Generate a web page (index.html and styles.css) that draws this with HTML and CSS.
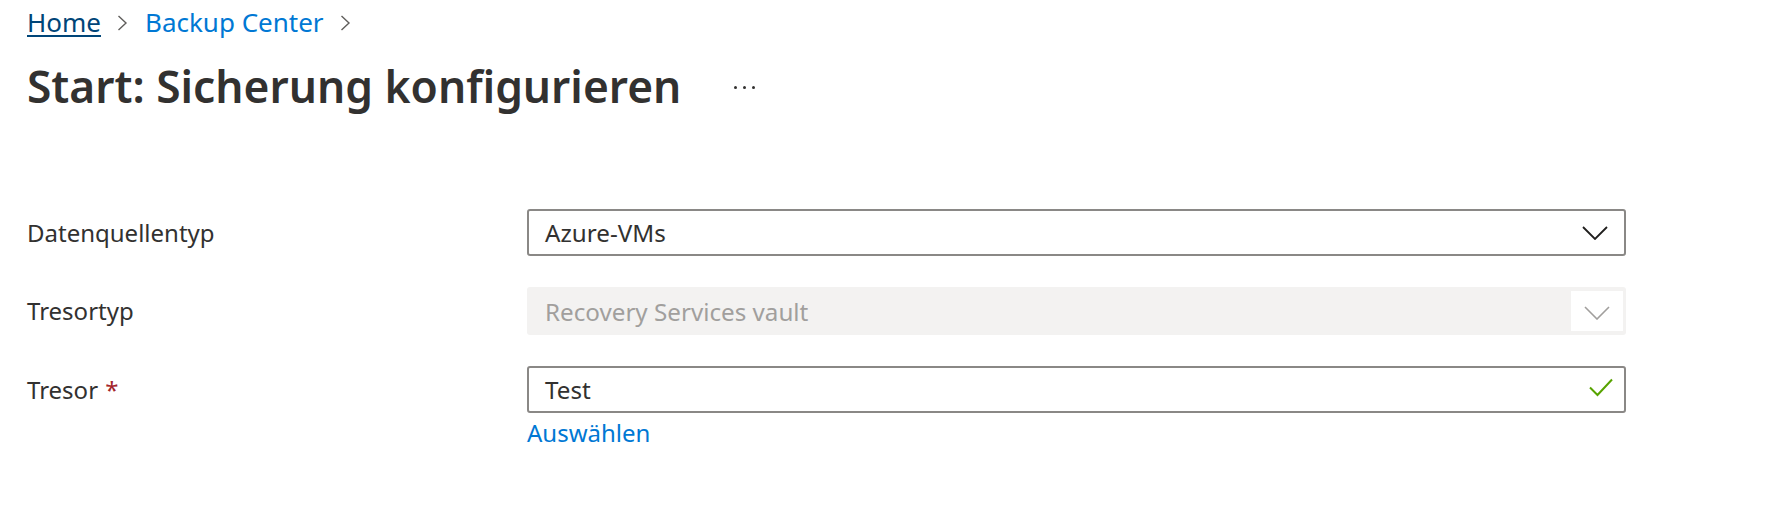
FILE: index.html
```html
<!DOCTYPE html>
<html lang="de">
<head>
<meta charset="utf-8">
<title>Start: Sicherung konfigurieren</title>
<link rel="stylesheet" href="styles.css">
</head>
<body>
<div class="page">
  <nav class="breadcrumb">
    <a class="crumb crumb-home" href="#">Home</a>
    <svg class="crumb-sep" width="11" height="16" viewBox="0 0 11 16"><path d="M1.5 1 L9 8 L1.5 15" fill="none" stroke="#605e5c" stroke-width="1.4"/></svg>
    <a class="crumb" href="#">Backup Center</a>
    <svg class="crumb-sep" width="11" height="16" viewBox="0 0 11 16"><path d="M1.5 1 L9 8 L1.5 15" fill="none" stroke="#605e5c" stroke-width="1.4"/></svg>
  </nav>

  <header class="title-bar">
    <h1 class="title">Start: Sicherung konfigurieren</h1>
    <span class="more" aria-label="Weitere Optionen"><i></i><i></i><i></i></span>
  </header>

  <form class="form">
    <div class="row">
      <label class="label">Datenquellentyp</label>
      <div class="control">
        <div class="field">
          <span class="value">Azure-VMs</span>
          <svg class="chevron" width="26" height="14" viewBox="0 0 26 14"><path d="M1 1 L13 13 L25 1" fill="none" stroke="#201f1e" stroke-width="1.8"/></svg>
        </div>
      </div>
    </div>

    <div class="row">
      <label class="label">Tresortyp</label>
      <div class="control">
        <div class="field field-disabled">
          <span class="value">Recovery Services vault</span>
          <span class="caret-box">
            <svg width="26" height="14" viewBox="0 0 26 14"><path d="M1 1 L13 13 L25 1" fill="none" stroke="#a19f9d" stroke-width="1.6"/></svg>
          </span>
        </div>
      </div>
    </div>

    <div class="row row-last">
      <label class="label">Tresor <span class="req">*</span></label>
      <div class="control">
        <div class="field">
          <span class="value">Test</span>
          <svg class="check" width="24" height="19" viewBox="0 0 24 19"><path d="M1 9.5 L8.5 17 L23 1.5" fill="none" stroke="#57a300" stroke-width="2"/></svg>
        </div>
      </div>
    </div>
    <div class="row-link">
      <span></span>
      <a class="link" href="#">Auswählen</a>
    </div>
  </form>
</div>
</body>
</html>
```
FILE: styles.css
```css
html, body {
  margin: 0;
  padding: 0;
  background: #ffffff;
}

body {
  font-family: "Noto Sans", "Open Sans", sans-serif;
  color: #323130;
}

.page {
  padding: 5px 0 0 27px;
}

.breadcrumb {
  display: flex;
  align-items: center;
  height: 34px;
  font-size: 26px;
  line-height: 34px;
}

.crumb {
  color: #0078d4;
  text-decoration: none;
}

.crumb-home {
  color: #004578;
  text-decoration: underline;
  text-underline-offset: 3px;
  text-decoration-thickness: 2px;
}

.crumb-sep {
  margin: 2px 17px 0 16px;
}

.title-bar {
  display: flex;
  align-items: center;
  margin-top: 17px;
  height: 60px;
}

.title {
  margin: 0;
  font-size: 44.3px;
  font-weight: 600;
  line-height: 60px;
  color: #323130;
}

.more {
  display: flex;
  gap: 6px;
  margin-left: 53px;
  margin-top: 3px;
}

.more i {
  display: block;
  width: 3px;
  height: 3px;
  border-radius: 50%;
  background: #323130;
}

.form {
  margin-top: 93px;
  width: 1599px;
}

.row {
  display: grid;
  grid-template-columns: 500px 1099px;
  align-items: center;
  margin-bottom: 31px;
}

.row-last {
  margin-bottom: 0;
}

.label {
  font-size: 24px;
  line-height: 32px;
  color: #323130;
}

.req {
  color: #a4262c;
  margin-left: 1px;
}

.field {
  box-sizing: border-box;
  height: 47px;
  border: 2px solid #8a8886;
  border-radius: 3px;
  display: flex;
  align-items: center;
  padding: 0 16px;
  font-size: 24.2px;
  color: #323130;
}

.value {
  flex: 1;
  line-height: 43px;
}

.chevron {
  margin-top: 1px;
}

.check {
  margin-right: -5px;
  margin-top: -4px;
}

.field-disabled {
  height: 48px;
  border: none;
  background: #f3f2f1;
  color: #a19f9d;
  padding: 0 3px 0 18px;
}

.caret-box {
  display: flex;
  align-items: center;
  justify-content: center;
  width: 52px;
  height: 40px;
  background: #ffffff;
  padding-top: 3px;
  box-sizing: border-box;
}

.row-link {
  display: grid;
  grid-template-columns: 500px 1099px;
  margin-top: 5px;
}

.link {
  font-size: 24px;
  line-height: 29px;
  color: #0078d4;
  text-decoration: none;
  justify-self: start;
}
```
